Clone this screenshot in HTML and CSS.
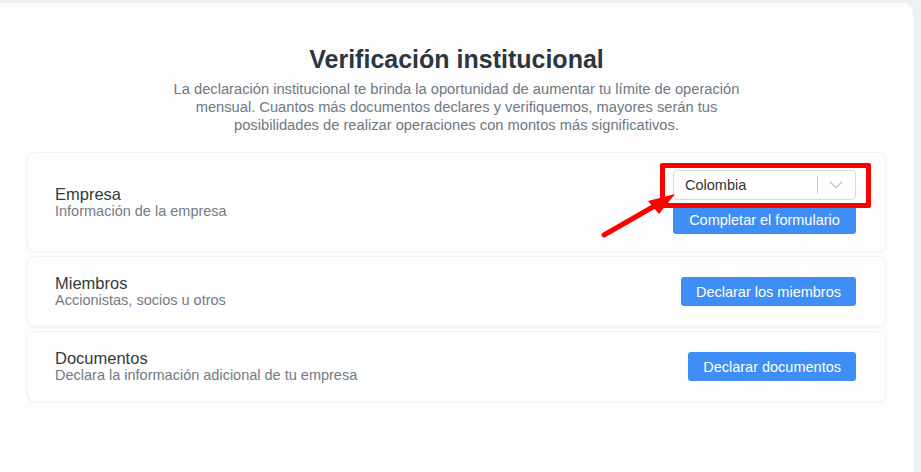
FILE: index.html
```html
<!DOCTYPE html>
<html lang="es">
<head>
<meta charset="utf-8">
<title>Verificación institucional</title>
<link rel="stylesheet" href="styles.css">
</head>
<body>
<main class="panel">
  <h1 class="title">Verificación institucional</h1>
  <p class="intro">La declaración institucional te brinda la oportunidad de aumentar tu límite de operación<br>mensual. Cuantos más documentos declares y verifiquemos, mayores serán tus<br>posibilidades de realizar operaciones con montos más significativos.</p>

  <section class="cards">
    <div class="card card-tall">
      <div class="info">
        <div class="card-title">Empresa</div>
        <div class="card-sub">Información de la empresa</div>
      </div>
      <div class="actions">
        <div class="select">
          <span class="select-value">Colombia</span>
          <span class="select-sep"></span>
          <svg class="chevron" width="14" height="8" viewBox="0 0 14 8"><path d="M1 1 L7 6.5 L13 1" fill="none" stroke="#c4c4c4" stroke-width="1.4"/></svg>
        </div>
        <button class="btn">Completar el formulario</button>
        <div class="highlight"></div>
        <svg class="arrow" width="90" height="52" viewBox="0 0 90 52">
          <line x1="6" y1="45" x2="60" y2="14" stroke="#ff0000" stroke-width="5" stroke-linecap="round"/>
          <polygon points="77,4 50,11 61,24" fill="#ff0000"/>
        </svg>
      </div>
    </div>

    <div class="card">
      <div class="info">
        <div class="card-title">Miembros</div>
        <div class="card-sub">Accionistas, socios u otros</div>
      </div>
      <button class="btn">Declarar los miembros</button>
    </div>

    <div class="card">
      <div class="info">
        <div class="card-title">Documentos</div>
        <div class="card-sub">Declara la información adicional de tu empresa</div>
      </div>
      <button class="btn">Declarar documentos</button>
    </div>
  </section>
</main>
</body>
</html>
```

FILE: styles.css
```css
* { box-sizing: border-box; }

html, body {
  margin: 0;
  padding: 0;
}

body {
  background: #eef1f4;
  font-family: "Liberation Sans", Arial, sans-serif;
  color: #333;
}

.panel {
  margin: 3px 8px 0 0;
  min-height: 469px;
  background: #fdfdfd;
  border-radius: 0 10px 0 0;
  padding: 42px 27px 0;
}

.title {
  margin: 0;
  text-align: center;
  font-size: 25px;
  line-height: 28px;
  font-weight: bold;
  color: #2b3640;
}

.intro {
  margin: 7px auto 0;
  text-align: center;
  font-size: 14.7px;
  line-height: 18px;
  color: #6f7983;
}

.cards {
  margin-top: 18px;
  display: flex;
  flex-direction: column;
  gap: 4px;
}

.card {
  display: flex;
  align-items: center;
  justify-content: space-between;
  height: 71px;
  padding: 0 29px 0 27px;
  background: #fefefe;
  border: 1px solid #f2f3f5;
  border-radius: 8px;
  box-shadow: 0 1px 3px rgba(0, 0, 0, 0.035);
}

.card-tall {
  height: 100px;
}

.card-title {
  font-size: 16.5px;
  line-height: 18px;
  color: #333a40;
}

.card-sub {
  font-size: 14.5px;
  line-height: 17px;
  color: #737b84;
}

.actions {
  position: relative;
  width: 183px;
  display: flex;
  flex-direction: column;
  gap: 5px;
}

.select {
  display: flex;
  align-items: center;
  height: 30px;
  border: 1px solid #dadada;
  border-radius: 4px;
  background: #fff;
  padding-left: 11px;
}

.select-value {
  flex: 1;
  font-size: 14.5px;
  color: #333;
}

.select-sep {
  width: 1px;
  height: 18px;
  background: #cccccc;
}

.chevron {
  margin: 0 12px 0 11px;
}

.btn {
  height: 29px;
  padding: 0 15px;
  border: 0;
  border-radius: 3px;
  background: #3f8ef5;
  color: #fff;
  font-family: "Liberation Sans", Arial, sans-serif;
  font-size: 14.5px;
  cursor: pointer;
}

.highlight {
  position: absolute;
  left: -13px;
  top: -7px;
  width: 211px;
  height: 45px;
  border: 5px solid #ff0000;
  border-radius: 2px;
  pointer-events: none;
}

.arrow {
  position: absolute;
  left: -75px;
  top: 20px;
  pointer-events: none;
}
```
